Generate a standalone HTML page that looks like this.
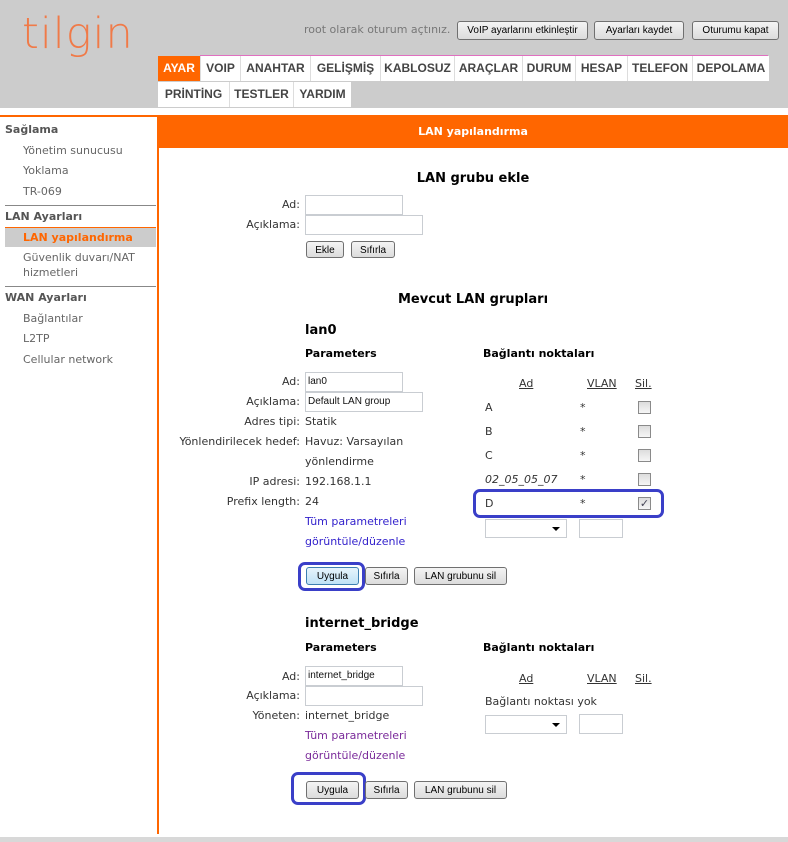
<!DOCTYPE html>
<html><head><meta charset="utf-8"><style>
*{margin:0;padding:0;box-sizing:border-box}
body{width:788px;height:842px;background:#fff;position:relative;overflow:hidden;font-family:"DejaVu Sans","Liberation Sans",sans-serif;font-size:11px;color:#333}
.a{position:absolute;line-height:14px;white-space:nowrap}
.r{position:absolute;right:488px;line-height:14px;white-space:nowrap;text-align:right}
.b{font-weight:bold}
.in{position:absolute;border:1px solid #c9cdd2;background:#fff;font-size:10px;padding:3px 2px;line-height:12px;font-family:"Liberation Sans",sans-serif;color:#111}
.btn{position:absolute;border:1px solid #707070;border-radius:3px;background:linear-gradient(#f4f4f4,#dcdcdc);font-family:"Liberation Sans",sans-serif;font-size:10px;text-align:center;line-height:16px;padding-top:1px;color:#000}
.m{position:absolute;height:25px;background:#fff;border-left:1px solid #ddd;font-family:"Liberation Sans",sans-serif;font-weight:bold;font-size:12px;color:#444;text-align:center;line-height:25px}
.cb{position:absolute;width:13px;height:13px;border:1px solid #8a8a8a;background:linear-gradient(#ddd,#f6f6f6)}
.box{position:absolute;border:3px solid #3a3fc8;border-radius:7px}
.sel{position:absolute;border:1px solid #c9cdd2;background:#fff}
.sel:after{content:"";position:absolute;right:6px;top:7px;border-left:4px solid transparent;border-right:4px solid transparent;border-top:4px solid #000}
.u{text-decoration:underline}
.s{position:absolute;left:23px;line-height:14px;color:#666;white-space:nowrap}
.sh{position:absolute;left:5px;line-height:14px;color:#555;font-weight:bold}
</style></head><body>
<div style="position:absolute;left:0;top:0;width:788px;height:108px;background:#cccccc"></div>
<div class="a" style="left:22px;top:10px;font-size:43px;line-height:48px;color:#f07a48;font-family:'DejaVu Sans',sans-serif;font-weight:200;letter-spacing:1px">tilgin</div>
<div class="a" style="left:304px;top:23px;color:#777">root olarak oturum açtınız.</div>
<div class="btn" style="left:457px;top:21px;width:131px;height:19px">VoIP ayarlarını etkinleştir</div>
<div class="btn" style="left:594px;top:21px;width:90px;height:19px">Ayarları kaydet</div>
<div class="btn" style="left:692px;top:21px;width:87px;height:19px">Oturumu kapat</div>
<div style="position:absolute;left:200px;top:55px;width:568px;height:1px;background:#e070c0"></div>
<div class="m" style="left:158px;top:56px;width:42px;background:#ff6600;color:#fff;border:0">AYAR</div>
<div class="m" style="left:200px;top:56px;width:40px">VOIP</div>
<div class="m" style="left:240px;top:56px;width:70px">ANAHTAR</div>
<div class="m" style="left:310px;top:56px;width:70px">GELİŞMİŞ</div>
<div class="m" style="left:380px;top:56px;width:74px">KABLOSUZ</div>
<div class="m" style="left:454px;top:56px;width:68px">ARAÇLAR</div>
<div class="m" style="left:522px;top:56px;width:53px">DURUM</div>
<div class="m" style="left:575px;top:56px;width:52px">HESAP</div>
<div class="m" style="left:627px;top:56px;width:65px">TELEFON</div>
<div class="m" style="left:692px;top:56px;width:77px">DEPOLAMA</div>
<div class="m" style="left:158px;top:82px;width:71px;border:0">PRİNTİNG</div>
<div class="m" style="left:229px;top:82px;width:64px">TESTLER</div>
<div class="m" style="left:293px;top:82px;width:58px">YARDIM</div>
<div style="position:absolute;left:0;top:115px;width:788px;height:2px;background:#ff6600"></div>
<div style="position:absolute;left:158px;top:115px;width:630px;height:33px;background:#ff6600"></div>
<div style="position:absolute;left:157px;top:115px;width:2px;height:719px;background:#ff6600"></div>
<div class="a b" style="left:158px;width:630px;text-align:center;top:125px;color:#fff">LAN yapılandırma</div>
<div style="position:absolute;left:0;top:837px;width:788px;height:5px;background:#d8d8d8"></div>
<div class="sh" style="top:123px">Sağlama</div>
<div class="s" style="top:144px">Yönetim sunucusu</div>
<div class="s" style="top:164px">Yoklama</div>
<div class="s" style="top:185px">TR-069</div>
<div style="position:absolute;left:5px;top:205px;width:151px;height:1px;background:#888"></div>
<div class="sh" style="top:210px">LAN Ayarları</div>
<div style="position:absolute;left:5px;top:227px;width:151px;height:20px;background:#ccc;border-top:1px solid #ff6600"></div>
<div class="s b" style="top:231px;color:#ff6600">LAN yapılandırma</div>
<div class="s" style="top:251px">Güvenlik duvarı/NAT</div>
<div class="s" style="top:266px">hizmetleri</div>
<div style="position:absolute;left:5px;top:286px;width:151px;height:1px;background:#888"></div>
<div class="sh" style="top:291px">WAN Ayarları</div>
<div class="s" style="top:312px">Bağlantılar</div>
<div class="s" style="top:332px">L2TP</div>
<div class="s" style="top:353px">Cellular network</div>
<div class="a b" style="left:158px;width:630px;text-align:center;top:172px;font-size:13px;color:#000">LAN grubu ekle</div>
<div class="r" style="top:198px">Ad:</div>
<div class="in" style="left:305px;top:195px;width:98px;height:20px"></div>
<div class="r" style="top:218px">Açıklama:</div>
<div class="in" style="left:305px;top:215px;width:118px;height:20px"></div>
<div class="btn" style="left:306px;top:241px;width:38px;height:17px">Ekle</div>
<div class="btn" style="left:351px;top:241px;width:44px;height:17px">Sıfırla</div>
<div class="a b" style="left:158px;width:630px;text-align:center;top:293px;font-size:13px;color:#000">Mevcut LAN grupları</div>
<div class="a b" style="left:305px;top:324px;font-size:13px;color:#000">lan0</div>
<div class="a b" style="left:305px;top:347px;color:#000">Parameters</div>
<div class="a b" style="left:483px;top:347px;color:#000">Bağlantı noktaları</div>
<div class="r" style="top:375px">Ad:</div>
<div class="in" style="left:305px;top:372px;width:98px;height:20px">lan0</div>
<div class="r" style="top:395px">Açıklama:</div>
<div class="in" style="left:305px;top:392px;width:118px;height:20px">Default LAN group</div>
<div class="r" style="top:415px">Adres tipi:</div><div class="a" style="left:305px;top:415px">Statik</div>
<div class="r" style="top:435px">Yönlendirilecek hedef:</div><div class="a" style="left:305px;top:435px">Havuz: Varsayılan</div>
<div class="a" style="left:305px;top:455px">yönlendirme</div>
<div class="r" style="top:475px">IP adresi:</div><div class="a" style="left:305px;top:475px">192.168.1.1</div>
<div class="r" style="top:495px">Prefix length:</div><div class="a" style="left:305px;top:495px">24</div>
<div class="a" style="left:305px;top:515px;color:#3322cc">Tüm parametreleri</div>
<div class="a" style="left:305px;top:535px;color:#3322cc">görüntüle/düzenle</div>
<div class="a u" style="left:519px;top:377px">Ad</div>
<div class="a u" style="left:587px;top:377px">VLAN</div>
<div class="a u" style="left:635px;top:377px">Sil.</div>
<div class="a" style="left:485px;top:401px">A</div><div class="a" style="left:580px;top:401px">*</div><div class="cb" style="left:638px;top:401px"></div>
<div class="a" style="left:485px;top:425px">B</div><div class="a" style="left:580px;top:425px">*</div><div class="cb" style="left:638px;top:425px"></div>
<div class="a" style="left:485px;top:449px">C</div><div class="a" style="left:580px;top:449px">*</div><div class="cb" style="left:638px;top:449px"></div>
<div class="a" style="left:485px;top:473px;font-style:italic">02_05_05_07</div><div class="a" style="left:580px;top:473px">*</div><div class="cb" style="left:638px;top:473px"></div>
<div class="a" style="left:485px;top:497px">D</div><div class="a" style="left:580px;top:497px">*</div><div class="cb" style="left:638px;top:497px;font-size:11px;line-height:11px;text-align:center;color:#445">✓</div>
<div class="box" style="left:473px;top:489px;width:191px;height:29px"></div>
<div class="sel" style="left:485px;top:519px;width:82px;height:19px"></div>
<div class="in" style="left:579px;top:519px;width:44px;height:19px"></div>
<div class="btn" style="left:306px;top:567px;width:53px;height:18px;background:linear-gradient(#e6f4fc,#bfe2f6);border-color:#3c7fb1">Uygula</div>
<div class="box" style="left:298px;top:562px;width:67px;height:29px"></div>
<div class="btn" style="left:365px;top:567px;width:43px;height:18px">Sıfırla</div>
<div class="btn" style="left:414px;top:567px;width:93px;height:18px">LAN grubunu sil</div>
<div class="a b" style="left:305px;top:617px;font-size:13px;color:#000">internet_bridge</div>
<div class="a b" style="left:305px;top:641px;color:#000">Parameters</div>
<div class="a b" style="left:483px;top:641px;color:#000">Bağlantı noktaları</div>
<div class="r" style="top:670px">Ad:</div>
<div class="in" style="left:305px;top:666px;width:98px;height:20px">internet_bridge</div>
<div class="r" style="top:689px">Açıklama:</div>
<div class="in" style="left:305px;top:686px;width:118px;height:20px"></div>
<div class="r" style="top:709px">Yöneten:</div><div class="a" style="left:305px;top:709px">internet_bridge</div>
<div class="a" style="left:305px;top:729px;color:#7a2a9a">Tüm parametreleri</div>
<div class="a" style="left:305px;top:749px;color:#7a2a9a">görüntüle/düzenle</div>
<div class="a u" style="left:519px;top:672px">Ad</div>
<div class="a u" style="left:587px;top:672px">VLAN</div>
<div class="a u" style="left:635px;top:672px">Sil.</div>
<div class="a" style="left:485px;top:695px">Bağlantı noktası yok</div>
<div class="sel" style="left:485px;top:715px;width:82px;height:19px"></div>
<div class="in" style="left:579px;top:714px;width:44px;height:20px"></div>
<div class="btn" style="left:306px;top:781px;width:53px;height:18px">Uygula</div>
<div class="box" style="left:291px;top:772px;width:75px;height:33px"></div>
<div class="btn" style="left:365px;top:781px;width:43px;height:18px">Sıfırla</div>
<div class="btn" style="left:414px;top:781px;width:93px;height:18px">LAN grubunu sil</div>
</body></html>
